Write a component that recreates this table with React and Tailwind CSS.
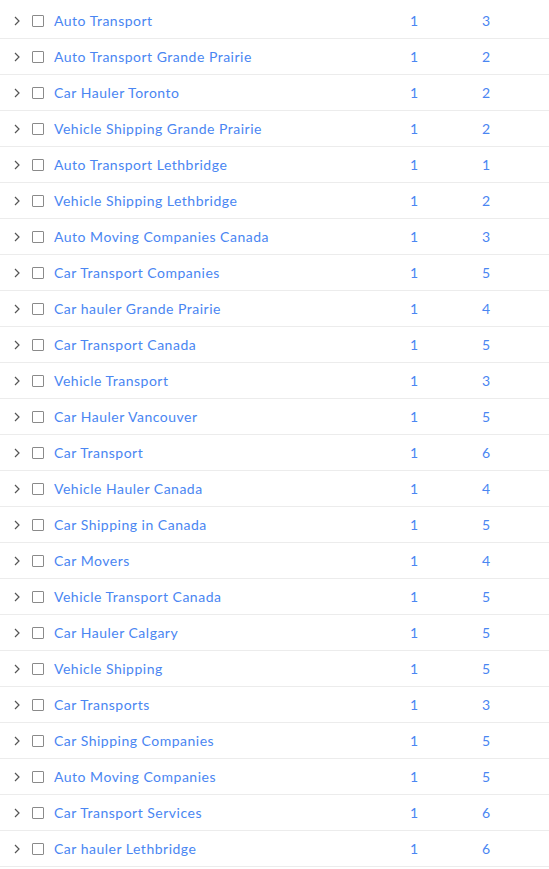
import React from "react";

const rows = [
  ["Auto Transport", 1, 3],
  ["Auto Transport Grande Prairie", 1, 2],
  ["Car Hauler Toronto", 1, 2],
  ["Vehicle Shipping Grande Prairie", 1, 2],
  ["Auto Transport Lethbridge", 1, 1],
  ["Vehicle Shipping Lethbridge", 1, 2],
  ["Auto Moving Companies Canada", 1, 3],
  ["Car Transport Companies", 1, 5],
  ["Car hauler Grande Prairie", 1, 4],
  ["Car Transport Canada", 1, 5],
  ["Vehicle Transport", 1, 3],
  ["Car Hauler Vancouver", 1, 5],
  ["Car Transport", 1, 6],
  ["Vehicle Hauler Canada", 1, 4],
  ["Car Shipping in Canada", 1, 5],
  ["Car Movers", 1, 4],
  ["Vehicle Transport Canada", 1, 5],
  ["Car Hauler Calgary", 1, 5],
  ["Vehicle Shipping", 1, 5],
  ["Car Transports", 1, 3],
  ["Car Shipping Companies", 1, 5],
  ["Auto Moving Companies", 1, 5],
  ["Car Transport Services", 1, 6],
  ["Car hauler Lethbridge", 1, 6],
];

const Chevron = () => (
  <svg width="8" height="10" viewBox="0 0 8 10" className="text-[#555]">
    <path d="M2 1l4 4-4 4" fill="none" stroke="currentColor" strokeWidth="1.2" />
  </svg>
);

const App = () => {
  return (
    <div className="bg-white min-h-screen pt-[3px] font-['Lato',sans-serif]">
      {rows.map(([name, a, b], i) => (
        <div
          key={i}
          className="flex items-center h-[36px] border-b border-[#ececec] text-[14px] tracking-[0.5px] text-[#4a86f2]"
        >
          <div className="w-[32px] flex justify-center pl-[2px]">
            <Chevron />
          </div>
          <div className="w-[12px] h-[12px] border border-[#8a8a8a] rounded-[1px]" />
          <div className="ml-[10px] w-[356px]">{name}</div>
          <div className="w-[72px]">{a}</div>
          <div>{b}</div>
        </div>
      ))}
    </div>
  );
};

export default App;
